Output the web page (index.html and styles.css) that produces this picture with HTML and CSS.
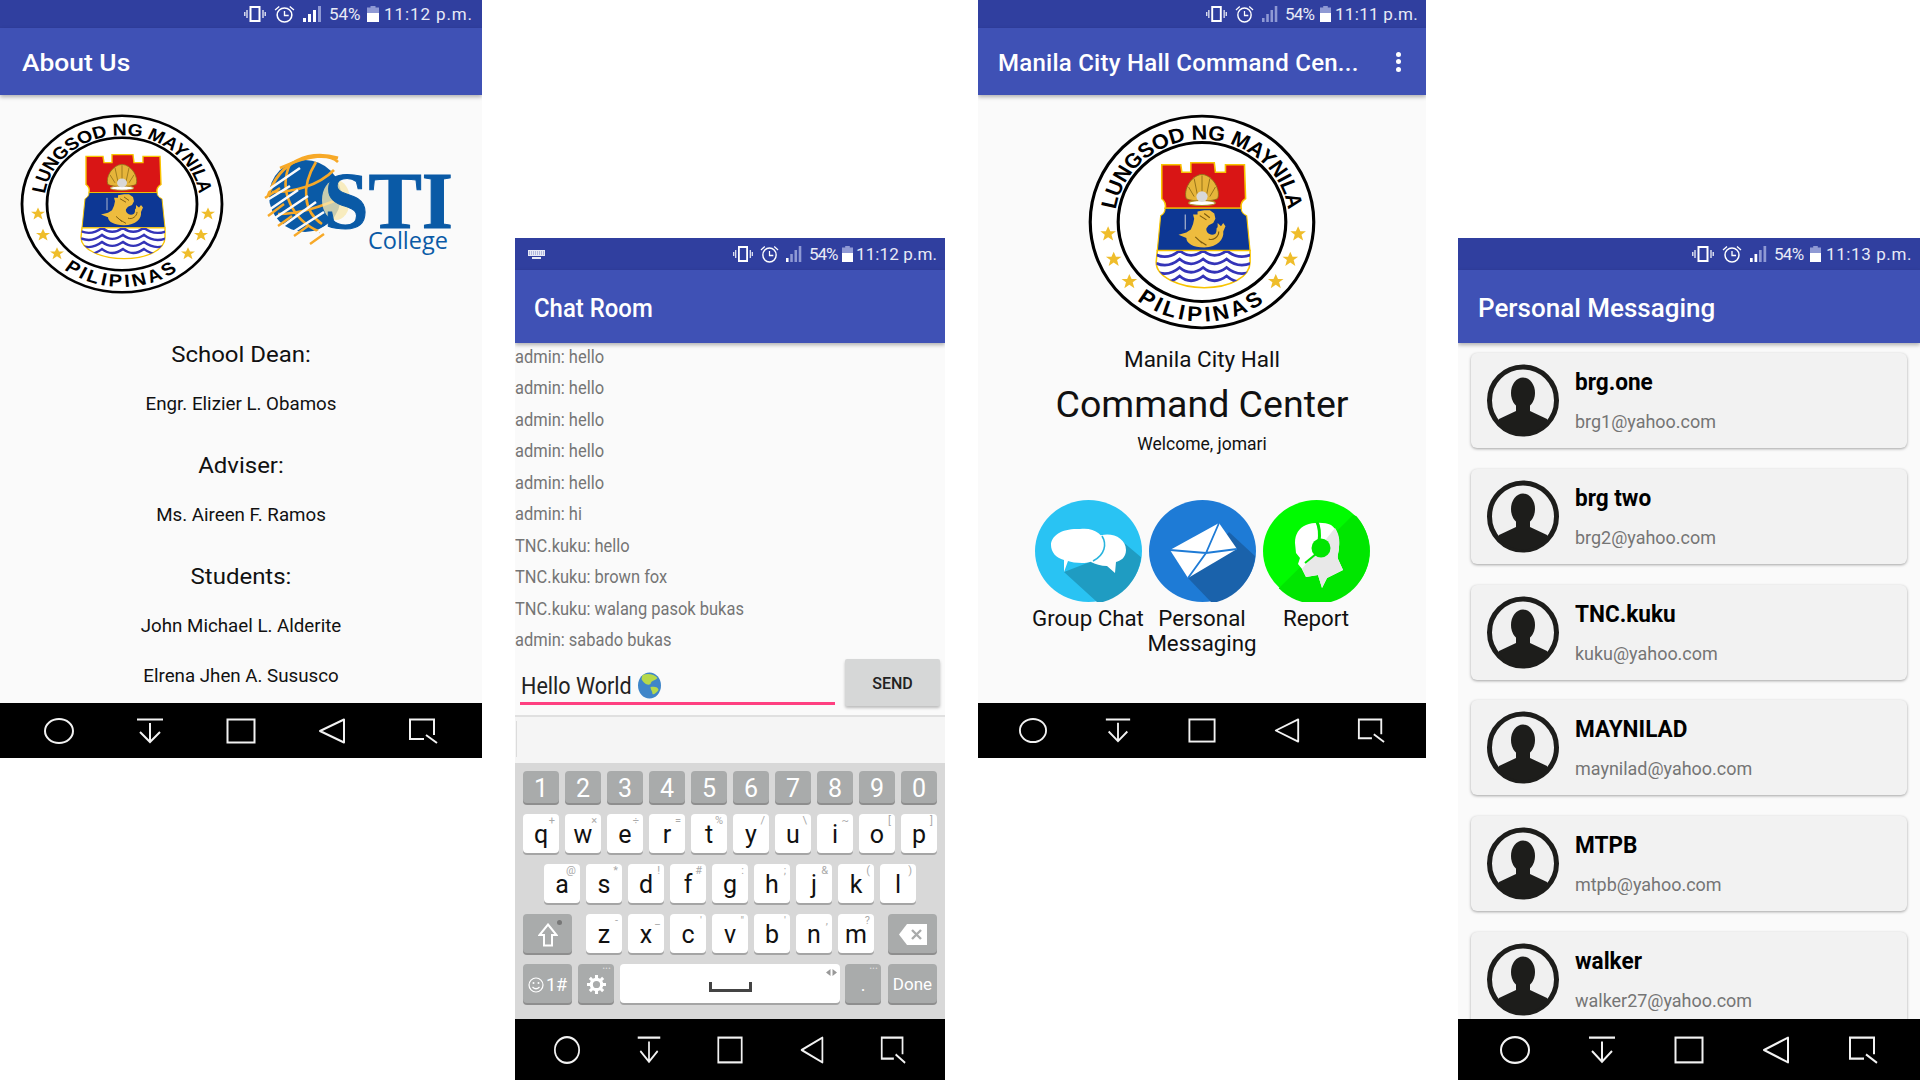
FILE: index.html
```html
<!DOCTYPE html>
<html lang="en">
<head>
    <meta charset="UTF-8">
    <title>Manila City Hall Command Center screens</title>
    <link rel="stylesheet" href="styles.css">
</head>
<body>
    <!-- shared drawings -->
    <svg class="defs" width="0" height="0">
        <defs>
            <path id="arcTop" d="M-77,-12.4 A78,78 0 0 1 77,-12.4"/>
            <path id="arcBottom" d="M-72,60.4 A94,94 0 0 0 72,60.4"/>
            <polygon id="star" points="0,-7 2,-2.2 7,-2.2 3,1 4.5,6.5 0,3.3 -4.5,6.5 -3,1 -7,-2.2 -2,-2.2"/>
            <clipPath id="shieldClip"><path d="M-40,27 L43,27 L43,38 C43,52 25,62 2,62 C-20,62 -41,52 -41,38 Z"/></clipPath>
            <clipPath id="circleClip"><circle cx="53.5" cy="51" r="53"/></clipPath>
            <clipPath id="avatarClip"><circle cx="36" cy="36.5" r="33"/></clipPath>

            <symbol id="seal" viewBox="-102 -102 204 204" preserveAspectRatio="none">
                <circle r="100" fill="#fff" stroke="#000" stroke-width="2.8"/>
                <circle r="75" fill="#fff" stroke="#000" stroke-width="2.8"/>
                <text class="seal-text"><textPath href="#arcTop" startOffset="50%" text-anchor="middle">LUNGSOD NG MAYNILA</textPath></text>
                <text class="seal-text seal-text-low"><textPath href="#arcBottom" startOffset="50%" text-anchor="middle">PILIPINAS</textPath></text>
                <path d="M-36,-54 L-19,-54 L-18,-47 L-10,-47 L-10,-56 L11,-56 L12,-47 L21,-47 L21,-54 L38,-54 L39,-22 A9,9 0 0 0 35,-13 L-33,-13 A9,9 0 0 0 -36,-22 Z" fill="#d91515" stroke="#f8c400" stroke-width="1.4"/>
                <path d="M-33,-13 L35,-13 A8,8 0 0 0 40,-6 L43,27 L-40,27 L-37,-6 A8,8 0 0 0 -33,-13 Z" fill="#0d3794" stroke="#f8c400" stroke-width="1"/>
                <path d="M-40,27 L43,27 L43,38 C43,52 25,62 2,62 C-20,62 -41,52 -41,38 Z" fill="#fff" stroke="#f8c400" stroke-width="1.4"/>
                <g clip-path="url(#shieldClip)" fill="none" stroke="#3434b8" stroke-width="2.6">
                    <path d="M-41,31 Q-30,36 -20,27 Q-10,36 1,27 Q11,36 22,27 Q32,36 44,31"/>
                    <path d="M-41,39 Q-30,44 -20,35 Q-10,44 1,35 Q11,44 22,35 Q32,44 44,39"/>
                    <path d="M-41,47 Q-30,52 -20,43 Q-10,52 1,43 Q11,52 22,43 Q32,52 44,47"/>
                    <path d="M-41,55 Q-30,60 -20,51 Q-10,60 1,51 Q11,60 22,51 Q32,60 44,55"/>
                </g>
                <path d="M-14,-22 C-17,-30 -10,-44 0,-45 C10,-44 17,-30 14,-22 C8,-19 -8,-19 -14,-22 Z" fill="#e6b53a" stroke="#8a6a16" stroke-width=".8"/>
                <path d="M0,-44 L0,-24 M-7,-41 L-4,-25 M7,-41 L4,-25 M-12,-33 L-7,-24 M12,-33 L7,-24" stroke="#8a6a16" stroke-width=".8"/>
                <ellipse cx="0" cy="-18" rx="12" ry="2.4" fill="#fff" stroke="#b28a20" stroke-width="1"/>
                <circle cx="0" cy="-24" r="5" fill="#d8d8d8"/>
                <path d="M-21,12 L-14,10 L-10,7 L-8,2 L-7,-3 L-8,-7 L-4,-7 L-4,-10 L2,-11 L4,-11 L7,-11 L11,-8 L12,-3 L10,1 L6,3 L4,6 C3,10 8,14 12,11 C14,8 12,6 14,5 L14,1 L17,4 L19,1 L21,4 L19,9 C20,16 14,24 2,24 C-8,24 -14,20 -14,15 Z" fill="#eebc3e"/>
                <path d="M-15,-7 L-15,7" stroke="#c9cdd8" stroke-width=".9"/>
                <path d="M6,16 C10,18 15,14 15,9 M-2,18 L4,22 M-6,14 L0,20 M-2,-6 L4,-2 M2,-8 L7,-4" stroke="#7a5a10" stroke-width="1" fill="none"/>
                <g fill="#efbd2b">
                    <use href="#star" x="-84" y="11"/><use href="#star" x="86" y="11"/>
                    <use href="#star" x="-79" y="35"/><use href="#star" x="79" y="35"/>
                    <use href="#star" x="-65" y="56"/><use href="#star" x="66" y="56"/>
                </g>
            </symbol>

            <symbol id="vibrate" viewBox="0 0 22 16" preserveAspectRatio="none">
                <rect x="6.5" y="1" width="9" height="14" fill="none" stroke="#fff" stroke-width="2"/>
                <path d="M3,4 V12 M.8,6 V10 M19,4 V12 M21.2,6 V10" stroke="#fff" stroke-width="1.2"/>
            </symbol>
            <symbol id="alarm" viewBox="0 0 20 18" preserveAspectRatio="none">
                <circle cx="10" cy="10" r="7" fill="none" stroke="#fff" stroke-width="1.5"/>
                <path d="M10,6 V10.5 H14 M1,5 L5,1.5 M19,5 L15,1.5" fill="none" stroke="#fff" stroke-width="1.3"/>
            </symbol>
            <symbol id="battery" viewBox="0 0 12 16" preserveAspectRatio="none">
                <path d="M3.5,0 H8.5 V1.5 H12 V9 H0 V1.5 H3.5 Z" fill="#8f99d4"/>
                <rect y="7" width="12" height="9" fill="#fff"/>
            </symbol>

            <symbol id="navHome" viewBox="0 0 30 26" preserveAspectRatio="none"><ellipse cx="15" cy="13" rx="14" ry="12" fill="none" stroke="#f2f2f2" stroke-width="2"/></symbol>
            <symbol id="navDown" viewBox="0 0 30 26" preserveAspectRatio="none"><path d="M2,1.5 H28 M15,5 V24 M5,14 L15,24 L25,14" fill="none" stroke="#f2f2f2" stroke-width="2"/></symbol>
            <symbol id="navSquare" viewBox="0 0 30 26" preserveAspectRatio="none"><rect x="1.5" y="1.5" width="27" height="23" fill="none" stroke="#f2f2f2" stroke-width="2"/></symbol>
            <symbol id="navBack" viewBox="0 0 30 26" preserveAspectRatio="none"><path d="M27,1.5 V24.5 L3,13 Z" fill="none" stroke="#f2f2f2" stroke-width="2" stroke-linejoin="round"/></symbol>
            <symbol id="navRecent" viewBox="0 0 30 26" preserveAspectRatio="none"><path d="M26,17 V1.5 H2 V21 H16 M18,17 L29,25" fill="none" stroke="#f2f2f2" stroke-width="2"/></symbol>

            <symbol id="avatar" viewBox="0 0 72 73">
                <circle cx="36" cy="36.5" r="33.5" fill="#f0f0f0" stroke="#1d1d1b" stroke-width="5"/>
                <g clip-path="url(#avatarClip)" fill="#1d1d1b">
                    <ellipse cx="36" cy="29" rx="12" ry="15.5"/>
                    <path d="M29,38 H43 V47 L60,55 V73 H12 V55 L29,47 Z"/>
                </g>
            </symbol>
        </defs>
    </svg>

    <div class="board">

        <!-- about screen -->
        <section class="phone phone-about">
            <header class="status-bar">
                <svg class="st-vib"><use href="#vibrate"/></svg>
                <svg class="st-alarm"><use href="#alarm"/></svg>
                <svg class="st-signal" viewBox="0 0 20 16" preserveAspectRatio="none"><rect class="on" x="0" y="12" width="3" height="4"/><rect class="on" x="5" y="8" width="3" height="8"/><rect class="on" x="10" y="4" width="3" height="12"/><rect x="15" y="0" width="3" height="16"/></svg>
                <span class="st-pct">54%</span>
                <svg class="st-batt"><use href="#battery"/></svg>
                <span class="st-time">11:12 p.m.</span>
            </header>
            <div class="toolbar"><h1>About Us</h1></div>
            <main class="content about">
                <div class="logos">
                    <svg class="seal-small"><use href="#seal"/></svg>
                    <svg class="sti-logo" viewBox="0 0 210 130">
                        <circle cx="55" cy="56" r="36" fill="#0a5aa6"/>
                        <path d="M18,56 C30,20 60,10 88,18" fill="none" stroke="#f7a928" stroke-width="3"/>
                        <path d="M30,28 C60,14 80,14 88,22 M40,24 C28,50 42,80 70,92 M66,22 C50,48 54,72 72,84 M22,52 C44,52 68,46 84,30 M28,74 C50,74 72,66 92,58" fill="none" stroke="#f7a928" stroke-width="2.6"/>
                        <path d="M15,52 L50,28 M14,62 L40,46 M16,72 L48,50 M22,80 L58,56 M30,88 L66,62 M40,94 L74,72 M56,100 L86,80 M72,102 L92,92" stroke="#fafafa" stroke-width="2.6"/>
                        <path d="M15,58 L30,48 M18,76 L34,64 M28,86 L42,76 M44,96 L58,86 M60,104 L74,94" stroke="#f7a928" stroke-width="2.4"/>
                        <ellipse cx="86" cy="60" rx="14" ry="20" fill="#f8e9b0" opacity=".8"/>
                        <text class="sti-name" x="74" y="88">STI</text>
                        <text class="sti-college" x="118" y="109">College</text>
                    </svg>
                </div>
                <h2>School Dean:</h2>
                <p>Engr. Elizier L. Obamos</p>
                <h2>Adviser:</h2>
                <p>Ms. Aireen F. Ramos</p>
                <h2>Students:</h2>
                <p>John Michael L. Alderite</p>
                <p>Elrena Jhen A. Sususco</p>
            </main>
            <nav class="nav-bar">
                <svg><use href="#navHome"/></svg><svg><use href="#navDown"/></svg><svg><use href="#navSquare"/></svg><svg><use href="#navBack"/></svg><svg><use href="#navRecent"/></svg>
            </nav>
        </section>

        <!-- chat room with keyboard open -->
        <section class="phone phone-chat">
            <header class="status-bar">
                <svg class="st-kbd" viewBox="0 0 17 9"><path d="M0,0 H17 V6 H0 Z M4,7 H13 V9 H4 Z" fill="#e8eaf6"/><path d="M1,2 H16 M1,4 H16" stroke="#303f9f" stroke-width=".6" stroke-dasharray="1 1"/></svg>
                <span class="st-spacer"></span>
                <svg class="st-vib"><use href="#vibrate"/></svg>
                <svg class="st-alarm"><use href="#alarm"/></svg>
                <svg class="st-signal" viewBox="0 0 20 16" preserveAspectRatio="none"><rect class="on" x="0" y="12" width="3" height="4"/><rect x="5" y="8" width="3" height="8"/><rect x="10" y="4" width="3" height="12"/><rect x="15" y="0" width="3" height="16"/></svg>
                <span class="st-pct">54%</span>
                <svg class="st-batt"><use href="#battery"/></svg>
                <span class="st-time">11:12 p.m.</span>
            </header>
            <div class="toolbar"><h1>Chat Room</h1></div>
            <main class="content chat">
                <ul class="messages">
                    <li>admin: hello</li>
                    <li>admin: hello</li>
                    <li>admin: hello</li>
                    <li>admin: hello</li>
                    <li>admin: hello</li>
                    <li>admin: hi</li>
                    <li>TNC.kuku: hello</li>
                    <li>TNC.kuku: brown fox</li>
                    <li>TNC.kuku: walang pasok bukas</li>
                    <li>admin: sabado bukas</li>
                </ul>
                <div class="composer">
                    <div class="input-line">
                        <span class="input-text">Hello World</span>
                        <svg class="globe" viewBox="0 0 24 27">
                            <ellipse cx="12" cy="13.5" rx="11.5" ry="13" fill="#3f86c9"/>
                            <path d="M5,3 C10,1 17,2 20,6 C17,9 14,8 13,12 C10,14 6,11 4,7 Z M13,15 C17,14 21,15 21,18 C19,21 16,23 15,22 C15,19 13,18 13,15 Z" fill="#b6d94a"/>
                        </svg>
                    </div>
                    <button type="button" class="send">SEND</button>
                </div>
            </main>
            <div class="suggestions"><span class="cursor-bar"></span></div>
            <div class="keyboard">
                <div class="kb-row row-num">
                    <span class="key gray">1</span><span class="key gray">2</span><span class="key gray">3</span><span class="key gray">4</span><span class="key gray">5</span><span class="key gray">6</span><span class="key gray">7</span><span class="key gray">8</span><span class="key gray">9</span><span class="key gray">0</span>
                </div>
                <div class="kb-row">
                    <span class="key">q<i>+</i></span><span class="key">w<i>×</i></span><span class="key">e<i>÷</i></span><span class="key">r<i>=</i></span><span class="key">t<i>%</i></span><span class="key">y<i>/</i></span><span class="key">u<i>\</i></span><span class="key">i<i>~</i></span><span class="key">o<i>[</i></span><span class="key">p<i>]</i></span>
                </div>
                <div class="kb-row row-mid">
                    <span class="key">a<i>@</i></span><span class="key">s<i>*</i></span><span class="key">d<i>!</i></span><span class="key">f<i>#</i></span><span class="key">g<i>:</i></span><span class="key">h<i>;</i></span><span class="key">j<i>&amp;</i></span><span class="key">k<i>(</i></span><span class="key">l<i>)</i></span>
                </div>
                <div class="kb-row row-low">
                    <span class="key gray wide">
                        <svg class="shift" viewBox="0 0 20 24"><path d="M10,1.5 L18.5,12 H14 V22.5 H6 V12 H1.5 Z" fill="none" stroke="#fff" stroke-width="2"/></svg>
                        <b class="shift-dot"></b>
                    </span>
                    <span class="letters">
                        <span class="key">z<i>-</i></span><span class="key">x<i>_</i></span><span class="key">c<i>'</i></span><span class="key">v<i>"</i></span><span class="key">b<i>'</i></span><span class="key">n<i>,</i></span><span class="key">m<i>?</i></span>
                    </span>
                    <span class="key gray wide">
                        <svg class="backspace" viewBox="0 0 28 21"><path d="M8,0 H28 V21 H8 L0,10.5 Z" fill="#fff"/><path d="M13,6 L22,15 M22,6 L13,15" stroke="#a9abab" stroke-width="2.4"/></svg>
                    </span>
                </div>
                <div class="kb-row row-bottom">
                    <span class="key gray wide sym">
                        <svg class="smile" viewBox="0 0 16 16"><circle cx="8" cy="8" r="7" fill="none" stroke="#fff" stroke-width="1.2"/><circle cx="5.5" cy="6" r="1" fill="#fff"/><circle cx="10.5" cy="6" r="1" fill="#fff"/><path d="M4.5,10 Q8,13.5 11.5,10" fill="none" stroke="#fff" stroke-width="1.2"/></svg>1#
                    </span>
                    <span class="key gray gear-key">
                        <svg class="gear" viewBox="0 0 20 20"><circle cx="10" cy="10" r="5.5" fill="none" stroke="#fff" stroke-width="3.4"/><path d="M10,0 V4 M10,16 V20 M0,10 H4 M16,10 H20 M3,3 L5.8,5.8 M14.2,14.2 L17,17 M17,3 L14.2,5.8 M5.8,14.2 L3,17" stroke="#fff" stroke-width="3.2"/></svg>
                        <i class="dots">•••</i>
                    </span>
                    <span class="key space">
                        <b class="space-mark"></b>
                        <svg class="arrows" viewBox="0 0 11 7"><path d="M4.5,0 V7 L0,3.5 Z M6.5,0 V7 L11,3.5 Z" fill="#999"/></svg>
                    </span>
                    <span class="key gray dot-key">.<i class="dots">•••</i></span>
                    <span class="key gray wide done">Done</span>
                </div>
            </div>
            <nav class="nav-bar">
                <svg><use href="#navHome"/></svg><svg><use href="#navDown"/></svg><svg><use href="#navSquare"/></svg><svg><use href="#navBack"/></svg><svg><use href="#navRecent"/></svg>
            </nav>
        </section>

        <!-- main menu -->
        <section class="phone phone-home">
            <header class="status-bar">
                <svg class="st-vib"><use href="#vibrate"/></svg>
                <svg class="st-alarm"><use href="#alarm"/></svg>
                <svg class="st-signal" viewBox="0 0 20 16" preserveAspectRatio="none"><rect x="0" y="12" width="3" height="4"/><rect x="5" y="8" width="3" height="8"/><rect x="10" y="4" width="3" height="12"/><rect x="15" y="0" width="3" height="16"/></svg>
                <span class="st-pct">54%</span>
                <svg class="st-batt"><use href="#battery"/></svg>
                <span class="st-time">11:11 p.m.</span>
            </header>
            <div class="toolbar">
                <h1>Manila City Hall Command Cen...</h1>
                <span class="overflow-dots"><b></b><b></b><b></b></span>
            </div>
            <main class="content home">
                <svg class="seal-large"><use href="#seal"/></svg>
                <div class="home-city">Manila City Hall</div>
                <div class="home-title">Command Center</div>
                <div class="home-welcome">Welcome, jomari</div>
                <div class="menu">
                    <div class="menu-item">
                        <svg class="menu-icon" viewBox="0 0 107 102" preserveAspectRatio="none">
                            <ellipse cx="53.5" cy="51" rx="53.5" ry="51" fill="#29c3f3"/>
                            <g clip-path="url(#circleClip)">
                                <path d="M29,72 L62,102 H107 V58 L88,42 L60,60 Z" fill="#1f9cc2"/>
                            </g>
                            <path d="M60,38 C72,30 91,36 91,50 C91,58 85,61 81,62 L80,73 L72,66 C66,66 60,64 56,62 Z" fill="#fff"/>
                            <path d="M45,29 C58,27 70,34 70,46 C70,56 60,63 47,63 C41,63 36,62 33,61 L29,72 L29,60 C21,58 16,52 16,45 C16,35 28,28 45,29 Z" fill="#fff"/>
                            <path d="M67,36 C72,44 70,55 58,61" fill="none" stroke="#29b4dd" stroke-width="1.6"/>
                        </svg>
                        <span>Group Chat</span>
                    </div>
                    <div class="menu-item">
                        <svg class="menu-icon" viewBox="0 0 107 102" preserveAspectRatio="none">
                            <ellipse cx="53.5" cy="51" rx="53.5" ry="51" fill="#1e7bd6"/>
                            <g clip-path="url(#circleClip)">
                                <path d="M39,78 L62,102 H107 V57 L80,32 Z" fill="#1a62ab"/>
                            </g>
                            <path d="M70,23 L88,49 L39,78 L21,50 Z" fill="#fff"/>
                            <path d="M21,50 L57,53 L88,49 M70,23 L57,53 L39,78" fill="none" stroke="#1e7bd6" stroke-width="1.8"/>
                        </svg>
                        <span>Personal Messaging</span>
                    </div>
                    <div class="menu-item">
                        <svg class="menu-icon" viewBox="0 0 107 102" preserveAspectRatio="none">
                            <ellipse cx="53.5" cy="51" rx="53.5" ry="51" fill="#00fb00"/>
                            <g clip-path="url(#circleClip)">
                                <path d="M90,15 L107,20 V102 H0 V90 L14,90 Z" fill="#00e600"/>
                            </g>
                            <path d="M32,43 C32,34 36,28 43,25 C50,22 62,22 68,25 C74,29 77,38 76,47 C76,52 74,55 75,59 L80,70 L64,78 L59,88 L55,75 L43,77 L39,69 L35,64 L37,58 L33,53 Z" fill="#fff"/>
                            <path d="M72,28 C76,34 77,40 76,47 C76,52 74,55 75,59 L80,70 L64,78 L59,88 L55,75 L43,77 L39,69 Z" fill="#e8e8e8"/>
                            <circle cx="58" cy="48" r="9.5" fill="#00e600"/>
                            <path d="M54,22 C57,28 57,34 56,42" fill="none" stroke="#00e600" stroke-width="3"/>
                            <path d="M53,54 L42,63" fill="none" stroke="#00e600" stroke-width="2"/>
                        </svg>
                        <span>Report</span>
                    </div>
                </div>
            </main>
            <nav class="nav-bar">
                <svg><use href="#navHome"/></svg><svg><use href="#navDown"/></svg><svg><use href="#navSquare"/></svg><svg><use href="#navBack"/></svg><svg><use href="#navRecent"/></svg>
            </nav>
        </section>

        <!-- contact list -->
        <section class="phone phone-msg">
            <header class="status-bar">
                <svg class="st-vib"><use href="#vibrate"/></svg>
                <svg class="st-alarm"><use href="#alarm"/></svg>
                <svg class="st-signal" viewBox="0 0 20 16" preserveAspectRatio="none"><rect class="on" x="0" y="12" width="3" height="4"/><rect class="on" x="5" y="8" width="3" height="8"/><rect x="10" y="4" width="3" height="12"/><rect x="15" y="0" width="3" height="16"/></svg>
                <span class="st-pct">54%</span>
                <svg class="st-batt"><use href="#battery"/></svg>
                <span class="st-time">11:13 p.m.</span>
            </header>
            <div class="toolbar"><h1>Personal Messaging</h1></div>
            <main class="content contacts">
                <div class="card"><svg class="avatar"><use href="#avatar"/></svg><div class="card-text"><div class="name">brg.one</div><div class="email">brg1@yahoo.com</div></div></div>
                <div class="card"><svg class="avatar"><use href="#avatar"/></svg><div class="card-text"><div class="name">brg two</div><div class="email">brg2@yahoo.com</div></div></div>
                <div class="card"><svg class="avatar"><use href="#avatar"/></svg><div class="card-text"><div class="name">TNC.kuku</div><div class="email">kuku@yahoo.com</div></div></div>
                <div class="card"><svg class="avatar"><use href="#avatar"/></svg><div class="card-text"><div class="name">MAYNILAD</div><div class="email">maynilad@yahoo.com</div></div></div>
                <div class="card"><svg class="avatar"><use href="#avatar"/></svg><div class="card-text"><div class="name">MTPB</div><div class="email">mtpb@yahoo.com</div></div></div>
                <div class="card"><svg class="avatar"><use href="#avatar"/></svg><div class="card-text"><div class="name">walker</div><div class="email">walker27@yahoo.com</div></div></div>
            </main>
            <nav class="nav-bar">
                <svg><use href="#navHome"/></svg><svg><use href="#navDown"/></svg><svg><use href="#navSquare"/></svg><svg><use href="#navBack"/></svg><svg><use href="#navRecent"/></svg>
            </nav>
        </section>

    </div>
</body>
</html>
```

FILE: styles.css
```css
* {
    box-sizing: border-box;
}

html,
body {
    margin: 0;
    padding: 0;
    height: 100%;
    background-color: #fff;
    overflow: hidden;
    font-family: Roboto, "Liberation Sans", sans-serif;
    color: #111;
}

.defs {
    display: block;
    height: 0;
}

.board {
    display: flex;
    align-items: flex-start;
    width: 1920px;
    height: 1080px;
}

/* phones */
.phone {
    display: flex;
    flex-direction: column;
    flex: none;
    overflow: hidden;
    background-color: #fafafa;
}

.phone-about {
    width: 482px;
    height: 758px;
}

.phone-chat {
    width: 430px;
    height: 842px;
    margin: 238px 0 0 33px;
}

.phone-home {
    width: 448px;
    height: 758px;
    margin-left: 33px;
}

.phone-msg {
    width: 462px;
    height: 842px;
    margin: 238px 0 0 32px;
}

/* status bar */
.status-bar {
    display: flex;
    align-items: center;
    justify-content: flex-end;
    flex: none;
    height: 28px;
    padding-right: 9px;
    background-color: #303f9f;
    color: #e8eaf6;
    font-size: 17px;
}

.phone-chat .status-bar,
.phone-msg .status-bar {
    height: 32px;
}

.st-vib {
    width: 22px;
    height: 16px;
    margin-right: 8px;
}

.st-alarm {
    width: 21px;
    height: 18px;
    margin-right: 8px;
}

.st-signal {
    width: 20px;
    height: 16px;
    margin-right: 6px;
}

.st-signal rect {
    fill: #8f99d4;
}

.st-signal rect.on {
    fill: #fff;
}

.st-pct {
    width: 31px;
    margin-right: 7px;
    white-space: nowrap;
}

.st-batt {
    width: 12px;
    height: 16px;
    margin-right: 5px;
}

.st-time {
    letter-spacing: 0.9px;
    white-space: nowrap;
}

.st-kbd {
    width: 17px;
    height: 9px;
    margin-left: 13px;
}

.st-spacer {
    flex: 1;
}

/* narrower status items on the squeezed screens */
.phone-chat .status-bar {
    padding-right: 8px;
}

.phone-chat .st-vib {
    width: 20px;
    margin-right: 7px;
}

.phone-chat .st-alarm {
    width: 19px;
    margin-right: 7px;
}

.phone-chat .st-signal {
    width: 17px;
}

.phone-chat .st-pct {
    width: 28px;
    margin-right: 5px;
    letter-spacing: -1px;
}

.phone-chat .st-batt {
    width: 11px;
    margin-right: 3px;
}

.phone-chat .st-time {
    letter-spacing: 0.1px;
}

.phone-home .status-bar {
    padding-right: 8px;
}

.phone-home .st-vib {
    width: 21px;
}

.phone-home .st-alarm {
    width: 19px;
}

.phone-home .st-signal {
    width: 17px;
}

.phone-home .st-pct {
    width: 29px;
    margin-right: 6px;
    letter-spacing: -0.8px;
}

.phone-home .st-batt {
    width: 11px;
    margin-right: 4px;
}

.phone-home .st-time {
    letter-spacing: 0.3px;
}

.phone-msg .status-bar {
    padding-right: 8px;
}

.phone-msg .st-alarm {
    width: 20px;
}

.phone-msg .st-signal {
    width: 18px;
}

.phone-msg .st-pct {
    width: 29px;
    letter-spacing: -0.7px;
}

.phone-msg .st-batt {
    width: 11px;
}

.phone-msg .st-time {
    letter-spacing: 0.6px;
}

/* toolbar */
.toolbar {
    display: flex;
    align-items: center;
    justify-content: space-between;
    flex: none;
    position: relative;
    z-index: 2;
    height: 67px;
    padding: 2px 20px 0;
    background-color: #3f51b5;
    box-shadow: 0 2px 4px rgba(0, 0, 0, 0.3);
    color: #fff;
}

.toolbar h1 {
    margin: 0;
    font-size: 26px;
    font-weight: 500;
    white-space: nowrap;
}

.phone-about .toolbar {
    padding-left: 22px;
}

.phone-about .toolbar h1 {
    font-size: 24px;
    transform: scaleX(1.1);
    transform-origin: left center;
}

.phone-chat .toolbar,
.phone-msg .toolbar {
    height: 73px;
}

.phone-chat .toolbar {
    padding-left: 19px;
}

.phone-chat .toolbar h1 {
    transform: scaleX(0.92);
    transform-origin: left center;
}

.phone-home .toolbar {
    padding: 2px 25px 0 20px;
}

.phone-home .toolbar h1 {
    font-size: 24px;
    letter-spacing: 0.25px;
}

.overflow-dots {
    display: flex;
    flex-direction: column;
    gap: 2.5px;
    margin-top: -2px;
}

.overflow-dots b {
    width: 5px;
    height: 5px;
    border-radius: 50%;
    background-color: #fff;
}

/* shared content */
.content {
    flex: 1;
    min-height: 0;
    overflow: hidden;
}

/* about screen */
.about {
    text-align: center;
}

.logos {
    display: flex;
    height: 223px;
    padding: 19px 0 0 20px;
}

.seal-small {
    width: 204px;
    height: 180px;
}

.sti-logo {
    width: 210px;
    height: 130px;
    margin: 26px 0 0 26px;
}

.seal-text {
    font-family: "Liberation Sans", sans-serif;
    font-size: 19.5px;
    font-weight: 700;
    letter-spacing: -0.2px;
    fill: #000;
}

.seal-text-low {
    font-size: 20px;
    letter-spacing: 3px;
}

.sti-name {
    font-family: "Liberation Serif", serif;
    font-size: 80px;
    font-weight: 700;
    fill: #0a5aa6;
    stroke: #0a5aa6;
    stroke-width: 1px;
}

.sti-college {
    font-family: "Open Sans", sans-serif;
    font-size: 23.5px;
    fill: #0a5aa6;
}

.about h2 {
    margin: 12px 0 -1px;
    font-size: 22px;
    font-weight: 400;
    line-height: 50px;
    transform: scaleX(1.09);
}

.about p {
    margin: 0;
    font-size: 17.5px;
    line-height: 50px;
    transform: scaleX(1.07);
}

/* chat screen */
.chat {
    display: flex;
    flex-direction: column;
}

.messages {
    margin: -1.5px 0 0;
    padding: 0;
    list-style: none;
    color: #757575;
    font-size: 18.5px;
    line-height: 31.5px;
}

.messages li {
    white-space: nowrap;
    transform: scaleX(0.89);
    transform-origin: left center;
}

.composer {
    display: flex;
    margin-top: 2.5px;
    padding-left: 5px;
}

.input-line {
    display: flex;
    align-items: center;
    gap: 7px;
    width: 315px;
    height: 46px;
    padding: 9px 0 0 1px;
    border-bottom: 3px solid #ff4081;
    font-size: 24.5px;
    color: #222;
}

.input-text {
    margin-right: -17px;
    transform: scaleX(0.88);
    transform-origin: left center;
}

.globe {
    width: 25px;
    height: 27px;
}

.send {
    width: 95px;
    height: 47px;
    margin: 0 0 0 10px;
    padding-top: 3px;
    border: none;
    border-radius: 2px;
    background-color: #d6d7d7;
    box-shadow: 0 2px 3px rgba(0, 0, 0, 0.25);
    font-family: Roboto, sans-serif;
    font-size: 16px;
    font-weight: 500;
    color: #222;
}

.suggestions {
    flex: none;
    height: 48px;
    padding: 4px 0 0 1px;
    border-top: 2px solid #e0e0e0;
    background-color: #f5f5f5;
}

.cursor-bar {
    display: block;
    width: 1px;
    height: 36px;
    background-color: #dcdcdc;
}

/* keyboard */
.keyboard {
    display: flex;
    flex-direction: column;
    gap: 11px;
    flex: none;
    height: 256px;
    padding: 8px 8px 0;
    background-color: #d8d8d8;
}

.kb-row {
    display: flex;
    gap: 6px;
    height: 39px;
}

.row-num {
    height: 32px;
}

.row-mid {
    padding-left: 21px;
}

.row-low {
    justify-content: space-between;
}

.letters {
    display: flex;
    gap: 6px;
}

.key {
    display: flex;
    align-items: center;
    justify-content: center;
    flex: none;
    position: relative;
    width: 36px;
    padding-top: 2px;
    border-radius: 4px;
    background-color: #fff;
    box-shadow: 0 2px 0 #a5a5a5;
    font-size: 25px;
    color: #111;
}

.key i {
    position: absolute;
    top: 0;
    right: 4px;
    font-size: 11px;
    font-style: normal;
    color: #aaa;
}

.key.gray {
    background-color: #a9abab;
    box-shadow: 0 2px 0 #8e8e8e;
    color: #fff;
}

.key.wide {
    width: 49px;
}

.shift {
    width: 20px;
    height: 24px;
}

.shift-dot {
    position: absolute;
    top: 6px;
    right: 10px;
    width: 5px;
    height: 5px;
    border-radius: 50%;
    background-color: #777;
}

.backspace {
    width: 28px;
    height: 21px;
}

.sym {
    gap: 2px;
    font-size: 18px;
}

.smile {
    width: 16px;
    height: 16px;
}

.gear {
    width: 19px;
    height: 19px;
}

.key .dots {
    top: 1px;
    right: 3px;
    font-size: 7px;
    letter-spacing: 0.5px;
    color: #ddd;
}

.key.space {
    width: 220px;
}

.space-mark {
    width: 43px;
    height: 10px;
    margin-top: 4px;
    border: 3px solid #444;
    border-top: none;
}

.arrows {
    position: absolute;
    top: 5px;
    right: 3px;
    width: 11px;
    height: 7px;
}

.key.done {
    padding-top: 0;
    font-size: 17px;
}

.row-bottom .dot-key {
    margin-left: -1px;
    margin-right: 1px;
    font-size: 18px;
}

/* home screen */
.home {
    display: flex;
    flex-direction: column;
    align-items: center;
    padding-top: 19px;
}

.seal-large {
    width: 228px;
    height: 216px;
}

.home-city {
    margin-top: 14px;
    font-size: 22.5px;
    line-height: 30px;
}

.home-title {
    margin-top: 8px;
    font-size: 37.5px;
    line-height: 44px;
}

.home-welcome {
    margin-top: 4.5px;
    font-size: 17.5px;
    line-height: 26px;
}

.menu {
    display: flex;
    gap: 7px;
    width: 335px;
    margin-top: 43px;
}

.menu-item {
    display: flex;
    flex-direction: column;
    align-items: center;
    width: 107px;
    font-size: 22.3px;
    line-height: 25px;
    text-align: center;
}

.menu-icon {
    flex: none;
    width: 107px;
    height: 102px;
    margin-bottom: 4px;
}

.menu-item span {
    width: 130px;
}

/* contacts */
.contacts {
    display: flex;
    flex-direction: column;
    gap: 20.8px;
    padding: 10px 13px 0;
}

.card {
    display: flex;
    flex: none;
    height: 95px;
    padding: 11px 0 0 16px;
    border-radius: 6px;
    background-color: #f2f2f2;
    box-shadow: 0 1px 3px rgba(0, 0, 0, 0.35);
}

.avatar {
    flex: none;
    width: 72px;
    height: 73px;
}

.card-text {
    margin-left: 16px;
}

.name {
    font-size: 24px;
    font-weight: 700;
    line-height: 36px;
    color: #000;
    white-space: nowrap;
    transform: scaleX(0.94);
    transform-origin: left center;
}

.email {
    margin-top: 8px;
    font-size: 19px;
    line-height: 28px;
    color: #757575;
    white-space: nowrap;
    transform: scaleX(0.945);
    transform-origin: left center;
}

/* nav bar */
.nav-bar {
    display: flex;
    align-items: center;
    justify-content: space-between;
    flex: none;
    position: relative;
    z-index: 2;
    height: 55px;
    padding: 0 44px;
    background-color: #000;
}

.nav-bar svg {
    width: 30px;
    height: 26px;
}

.phone-chat .nav-bar {
    height: 61px;
    padding: 0 39px;
}

.phone-chat .nav-bar svg {
    width: 26px;
    height: 28px;
}

.phone-home .nav-bar {
    padding: 0 41px;
}

.phone-home .nav-bar svg {
    width: 28px;
    height: 25px;
}

.phone-msg .nav-bar {
    height: 61px;
    padding: 0 42px;
}

.phone-msg .nav-bar svg {
    width: 30px;
    height: 28px;
}
```
